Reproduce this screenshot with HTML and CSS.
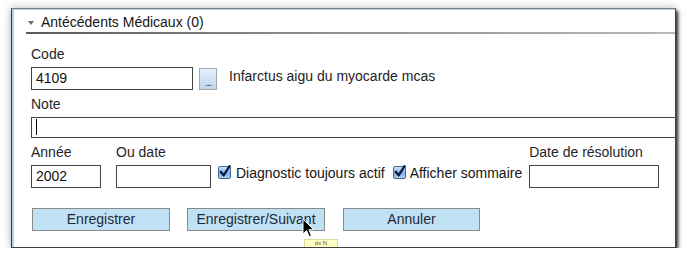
FILE: index.html
```html
<!DOCTYPE html>
<html lang="fr">
<head>
<meta charset="utf-8">
<title>Antécédents Médicaux</title>
<link rel="stylesheet" href="styles.css">
</head>
<body>
<div class="window">
  <div class="section-head"><span class="tri"></span><span class="title">Antécédents Médicaux (0)</span></div>
  <div class="rule"></div>
  <div class="form">
    <div class="lbl first">Code</div>
    <div class="row code-row">
      <div class="field code-field">4109</div>
      <div class="more">...</div>
      <span class="desc">Infarctus aigu du myocarde mcas</span>
    </div>
    <div class="lbl">Note</div>
    <div class="field note-field"><span class="text-caret"></span></div>
    <div class="row meta-row">
      <div class="col col-year"><div class="lbl">Année</div><div class="field">2002</div></div>
      <div class="col col-date"><div class="lbl">Ou date</div><div class="field"></div></div>
      <div class="check check-1"><span class="box"><svg width="14" height="14" viewBox="0 0 14 14"><path d="M2.8 6.8 L5.6 10.4 L11.6 1.2" fill="none" stroke="#0d1a3c" stroke-width="2.3" stroke-linecap="round" stroke-linejoin="round"/></svg></span><span class="ctext">Diagnostic toujours actif</span></div>
      <div class="check check-2"><span class="box"><svg width="14" height="14" viewBox="0 0 14 14"><path d="M2.8 6.8 L5.6 10.4 L11.6 1.2" fill="none" stroke="#0d1a3c" stroke-width="2.3" stroke-linecap="round" stroke-linejoin="round"/></svg></span><span class="ctext">Afficher sommaire</span></div>
      <div class="col col-res"><div class="lbl">Date de résolution</div><div class="field"></div></div>
    </div>
    <div class="row buttons">
      <div class="btn btn-save">Enregistrer</div>
      <div class="btn btn-next">Enregistrer/Suivant</div>
      <div class="btn btn-cancel">Annuler</div>
    </div>
  </div>
  <div class="tooltip">dx N</div>
  <svg class="pointer" width="13" height="20" viewBox="0 0 13 20"><path d="M1 1 L1 16 L4.6 12.6 L7.2 18.6 L9.4 17.6 L6.9 11.8 L11.8 11.8 Z" fill="#000" stroke="#fff" stroke-width="1" stroke-linejoin="round"/></svg>
</div>
</body>
</html>
```
FILE: styles.css
```css
html, body {
  margin: 0;
  padding: 0;
  background: #fff;
}
body {
  font-family: "Liberation Sans", Arial, Helvetica, sans-serif;
  font-size: 14px;
  line-height: 16px;
  color: #1a1a1a;
}
.window {
  position: relative;
  box-sizing: border-box;
  margin: 8px 0 0 11px;
  width: 665px;
  height: 240px;
  background: #fff;
  border: 1px solid #404040;
  border-top-color: #7d7d7d;
  overflow: hidden;
  box-shadow: inset 2px 0 0 #b7cdf0, inset 0 1px 0 #b7cdf0, 2px 3px 3px rgba(0,0,0,0.8), 0 0 9px rgba(0,0,0,0.28);
}
.section-head {
  display: flex;
  align-items: center;
  margin-left: 14px;
  padding-top: 5px;
  padding-bottom: 2px;
  height: 16px;
}
.tri {
  width: 0;
  height: 0;
  margin-left: 2px;
  margin-top: 2px;
  border-left: 3px solid transparent;
  border-right: 3px solid transparent;
  border-top: 4px solid #6b6b6b;
}
.title {
  margin-left: 7px;
  color: #151515;
}
.rule {
  margin-left: 14px;
  height: 2px;
  background: linear-gradient(to right, #5a5a5a, #8a8a8a 40%, #b8b8b8);
}
.form {
  padding-left: 19px;
}
.lbl {
  height: 16px;
  margin-top: 6px;
  color: #262626;
  white-space: nowrap;
}
.lbl.first {
  margin-top: 12px;
}
.row {
  display: flex;
  align-items: flex-start;
  margin-top: 5px;
}
.field {
  box-sizing: border-box;
  height: 23px;
  border: 1px solid #444;
  padding: 0 4px;
  line-height: 21px;
  background: #fff;
  color: #111;
}
.code-field {
  width: 162px;
}
.more {
  box-sizing: border-box;
  width: 18px;
  height: 22px;
  margin-left: 6px;
  margin-top: 1px;
  border: 1px solid #a3a8ad;
  background: linear-gradient(#e6f0fa, #bcd6ee);
  font-size: 11px;
  line-height: 11px;
  padding-top: 8px;
  text-align: center;
  color: #24324a;
  letter-spacing: -1px;
}
.desc {
  margin-left: 12px;
  margin-top: 1px;
  color: #1e1e1e;
}
.note-field {
  margin-top: 5px;
  width: 700px;
  height: 21px;
  position: relative;
}
.text-caret {
  display: block;
  width: 1px;
  height: 16px;
  margin-top: 1px;
  background: #000;
}
.meta-row {
  margin-top: 0;
}
.col .field {
  margin-top: 5px;
}
.col-year {
  width: 70px;
}
.col-year .field,
.col-date .field,
.col-res .field {
  width: 100%;
}
.col-date {
  width: 95px;
  margin-left: 15px;
}
.check {
  display: flex;
  align-items: flex-start;
  margin-top: 27px;
  white-space: nowrap;
}
.check-1 {
  margin-left: 7px;
}
.check-2 {
  margin-left: 8px;
}
.box {
  position: relative;
  box-sizing: border-box;
  width: 13px;
  height: 13px;
  margin-top: 1px;
  border: 1px solid #46648f;
  border-radius: 2px;
  background: linear-gradient(#d2e5fa, #7cb1e6 55%, #a9d0f4);
}
.box svg {
  position: absolute;
  left: -1px;
  top: -2px;
}
.check-1 .ctext {
  margin-left: 5px;
}
.check-2 .ctext {
  margin-left: 4px;
}
.ctext {
  color: #151515;
}
.col-res {
  width: 130px;
  margin-left: 7px;
}
.buttons {
  margin-top: 20px;
}
.btn {
  box-sizing: border-box;
  height: 23px;
  border: 1px solid #8a8a8a;
  background: #c0e1f4;
  text-align: center;
  line-height: 21px;
  color: #1e2a38;
  white-space: nowrap;
}
.btn-save {
  width: 138px;
  margin-left: 1px;
}
.btn-next {
  width: 138px;
  margin-left: 17px;
}
.btn-cancel {
  width: 137px;
  margin-left: 18px;
}
.tooltip {
  position: absolute;
  left: 292px;
  top: 230px;
  width: 34px;
  height: 20px;
  box-sizing: border-box;
  border: 1px solid #d9d6a4;
  background: #ffffc4;
  font-size: 6px;
  line-height: 6px;
  padding-top: 0;
  text-align: center;
  color: #555;
}
.pointer {
  position: absolute;
  left: 290px;
  top: 209px;
}
```
